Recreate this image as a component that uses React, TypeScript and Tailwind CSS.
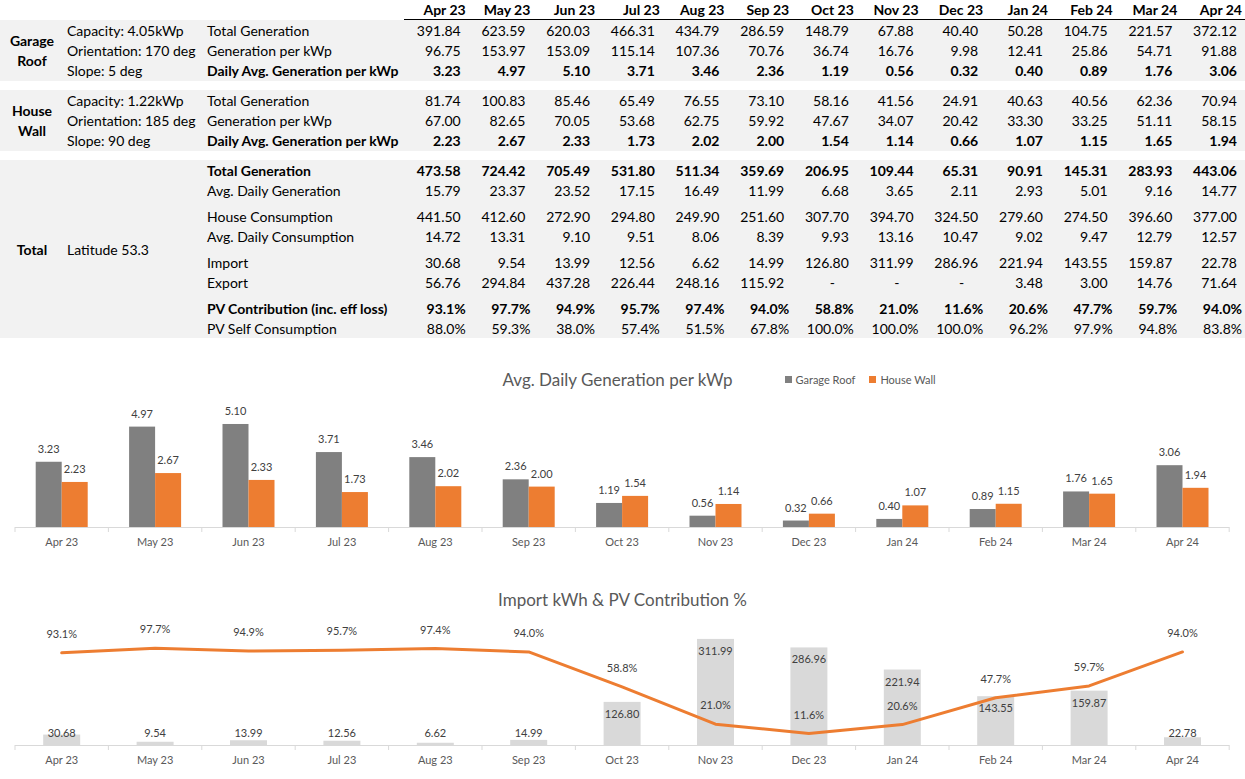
import { FunctionComponent } from "react";

const FONT = "Lato, 'Open Sans', sans-serif";

const months = ["Apr 23", "May 23", "Jun 23", "Jul 23", "Aug 23", "Sep 23", "Oct 23", "Nov 23", "Dec 23", "Jan 24", "Feb 24", "Mar 24", "Apr 24"];

const garage = {
    total: [391.84, 623.59, 620.03, 466.31, 434.79, 286.59, 148.79, 67.88, 40.4, 50.28, 104.75, 221.57, 372.12],
    perKwp: [96.75, 153.97, 153.09, 115.14, 107.36, 70.76, 36.74, 16.76, 9.98, 12.41, 25.86, 54.71, 91.88],
    daily: [3.23, 4.97, 5.1, 3.71, 3.46, 2.36, 1.19, 0.56, 0.32, 0.4, 0.89, 1.76, 3.06],
};

const house = {
    total: [81.74, 100.83, 85.46, 65.49, 76.55, 73.1, 58.16, 41.56, 24.91, 40.63, 40.56, 62.36, 70.94],
    perKwp: [67.0, 82.65, 70.05, 53.68, 62.75, 59.92, 47.67, 34.07, 20.42, 33.3, 33.25, 51.11, 58.15],
    daily: [2.23, 2.67, 2.33, 1.73, 2.02, 2.0, 1.54, 1.14, 0.66, 1.07, 1.15, 1.65, 1.94],
};

const totals = {
    gen: [473.58, 724.42, 705.49, 531.8, 511.34, 359.69, 206.95, 109.44, 65.31, 90.91, 145.31, 283.93, 443.06],
    avgGen: [15.79, 23.37, 23.52, 17.15, 16.49, 11.99, 6.68, 3.65, 2.11, 2.93, 5.01, 9.16, 14.77],
    cons: [441.5, 412.6, 272.9, 294.8, 249.9, 251.6, 307.7, 394.7, 324.5, 279.6, 274.5, 396.6, 377.0],
    avgCons: [14.72, 13.31, 9.1, 9.51, 8.06, 8.39, 9.93, 13.16, 10.47, 9.02, 9.47, 12.79, 12.57],
    imp: [30.68, 9.54, 13.99, 12.56, 6.62, 14.99, 126.8, 311.99, 286.96, 221.94, 143.55, 159.87, 22.78],
    exp: [56.76, 294.84, 437.28, 226.44, 248.16, 115.92, null, null, null, 3.48, 3.0, 14.76, 71.64],
    contrib: [93.1, 97.7, 94.9, 95.7, 97.4, 94.0, 58.8, 21.0, 11.6, 20.6, 47.7, 59.7, 94.0],
    self: [88.0, 59.3, 38.0, 57.4, 51.5, 67.8, 100.0, 100.0, 100.0, 96.2, 97.9, 94.8, 83.8],
};

const fmt = (v: number) => v.toLocaleString("en-GB", { minimumFractionDigits: 2, maximumFractionDigits: 2 });

type RowProps = {
    label: string
    values: (number | null)[]
    bold?: boolean
    pct?: boolean
}

const Row: FunctionComponent<RowProps> = ({ label, values, bold, pct }) => {
    return <div className={`grid grid-cols-[200px_repeat(13,1fr)] h-5 items-center ${bold ? "font-bold" : ""}`}>
        <span className="pl-[3px] whitespace-nowrap">{label}</span>
        {values.map((v, i) => (
            <span key={i} className={`text-right whitespace-nowrap ${pct ? "pr-[3px]" : "pr-[8px]"}`}>
                {v === null ? <span className="mr-[14px]">-</span> : pct ? v.toFixed(1) + "%" : fmt(v)}
            </span>
        ))}
    </div>
}

const Table = () => {
    return <div className="text-[14px] text-black leading-5">
        <div className="flex h-5 items-center">
            <div className="w-[404px]" />
            <div className="flex-1 grid grid-cols-[repeat(13,1fr)] font-bold border-b border-black h-5 items-center">
                {months.map((m) => <span key={m} className="text-right pr-[3px]">{m}</span>)}
            </div>
        </div>

        <div className="flex bg-[#f2f2f2] pt-[1px] h-[61px]">
            <div className="w-[64px] flex items-center justify-center text-center font-bold leading-[20px]">Garage<br />Roof</div>
            <div className="w-[140px] flex flex-col pl-[3px]">
                <span className="h-5">Capacity: 4.05kWp</span>
                <span className="h-5">Orientation: 170 deg</span>
                <span className="h-5">Slope: 5 deg</span>
            </div>
            <div className="flex-1 flex flex-col">
                <Row label="Total Generation" values={garage.total} />
                <Row label="Generation per kWp" values={garage.perKwp} />
                <Row label="Daily Avg. Generation per kWp" values={garage.daily} bold />
            </div>
        </div>

        <div className="flex bg-[#f2f2f2] pt-[1px] h-[61px] mt-[9px]">
            <div className="w-[64px] flex items-center justify-center text-center font-bold leading-[20px]">House<br />Wall</div>
            <div className="w-[140px] flex flex-col pl-[3px]">
                <span className="h-5">Capacity: 1.22kWp</span>
                <span className="h-5">Orientation: 185 deg</span>
                <span className="h-5">Slope: 90 deg</span>
            </div>
            <div className="flex-1 flex flex-col">
                <Row label="Total Generation" values={house.total} />
                <Row label="Generation per kWp" values={house.perKwp} />
                <Row label="Daily Avg. Generation per kWp" values={house.daily} bold />
            </div>
        </div>

        <div className="flex bg-[#f2f2f2] mt-[9px] pt-[1px] h-[178px]">
            <div className="w-[64px] flex items-center justify-center font-bold">Total</div>
            <div className="w-[140px] flex items-center pl-[3px]">Latitude 53.3</div>
            <div className="flex-1 flex flex-col gap-y-[6px]">
                <div>
                    <Row label="Total Generation" values={totals.gen} bold />
                    <Row label="Avg. Daily Generation" values={totals.avgGen} />
                </div>
                <div>
                    <Row label="House Consumption" values={totals.cons} />
                    <Row label="Avg. Daily Consumption" values={totals.avgCons} />
                </div>
                <div>
                    <Row label="Import" values={totals.imp} />
                    <Row label="Export" values={totals.exp} />
                </div>
                <div>
                    <Row label="PV Contribution (inc. eff loss)" values={totals.contrib} bold pct />
                    <Row label="PV Self Consumption" values={totals.self} pct />
                </div>
            </div>
        </div>
    </div>
}

// shared x axis
const X0 = 15
const CW = 93.4
const cx = (i: number) => X0 + CW * (i + 0.5)

const Axis: FunctionComponent<{ base: number }> = ({ base }) => {
    return <g>
        <line x1={X0} x2={X0 + CW * 13} y1={base + 0.5} y2={base + 0.5} stroke="#d9d9d9" strokeWidth={1} />
        {Array.from({ length: 14 }).map((_, i) => (
            <line key={i} x1={X0 + CW * i} x2={X0 + CW * i} y1={base} y2={base + 5} stroke="#d9d9d9" strokeWidth={1} />
        ))}
        {months.map((m, i) => (
            <text key={m} x={cx(i)} y={base + 19} textAnchor="middle" fontSize={11} fill="#595959">{m}</text>
        ))}
    </g>
}

const GenerationChart = () => {
    const base = 135
    const k = 20.2
    return <div className="mt-[29px]">
        <div className="grid grid-cols-[1fr_auto_1fr] h-[22px] items-center">
            <div />
            <span className="text-[17px] text-[#595959] pr-[10px]">Avg. Daily Generation per kWp</span>
            <div className="flex items-center gap-x-[4px] text-[11px] text-[#595959] pl-[42px]">
                <span className="w-[7px] h-[7px] bg-[#808080]" />
                <span>Garage Roof</span>
                <span className="w-[7px] h-[7px] bg-[#ed7d31] ml-[10px]" />
                <span>House Wall</span>
            </div>
        </div>
        <svg width={1245} height={160} style={{ fontFamily: FONT }} className="block mt-[3px]">
            {months.map((m, i) => {
                const g = garage.daily[i] * k
                const h = house.daily[i] * k
                return <g key={m}>
                    <rect x={cx(i) - 26} y={base - g} width={26} height={g} fill="#808080" />
                    <rect x={cx(i)} y={base - h} width={26} height={h} fill="#ed7d31" />
                    <text x={cx(i) - 13} y={base - g - 9} textAnchor="middle" fontSize={11} fill="#404040">{garage.daily[i].toFixed(2)}</text>
                    <text x={cx(i) + 13} y={base - h - 9} textAnchor="middle" fontSize={11} fill="#404040">{house.daily[i].toFixed(2)}</text>
                </g>
            })}
            <Axis base={base} />
        </svg>
    </div>
}

const ImportChart = () => {
    const base = 134
    const kb = 0.34
    const kl = 0.99
    const points = totals.contrib.map((p, i) => `${cx(i)},${base - p * kl}`).join(" ")
    return <div className="mt-[37px]">
        <div className="flex justify-center h-[22px] items-center">
            <span className="text-[17px] text-[#595959]">Import kWh &amp; PV Contribution %</span>
        </div>
        <svg width={1245} height={167} style={{ fontFamily: FONT }} className="block">
            {totals.imp.map((v, i) => {
                const h = v * kb
                const ly = Math.min(base - h + 12, base - 12)
                return <g key={i}>
                    <rect x={cx(i) - 18.5} y={base - h} width={37} height={h} fill="#d9d9d9" />
                    <text x={cx(i)} y={ly + 4} textAnchor="middle" fontSize={11} fill="#404040">{fmt(v)}</text>
                </g>
            })}
            <Axis base={base} />
            <polyline points={points} fill="none" stroke="#ed7d31" strokeWidth={3} strokeLinejoin="round" strokeLinecap="round" />
            {totals.contrib.map((p, i) => (
                <text key={i} x={cx(i)} y={base - p * kl - 15} textAnchor="middle" fontSize={11} fill="#404040">{p.toFixed(1)}%</text>
            ))}
        </svg>
    </div>
}

const App = () => {
    return <div className="w-[1245px] h-[779px] bg-white overflow-hidden" style={{ fontFamily: FONT }}>
        <Table />
        <GenerationChart />
        <ImportChart />
    </div>
}

export default App;
